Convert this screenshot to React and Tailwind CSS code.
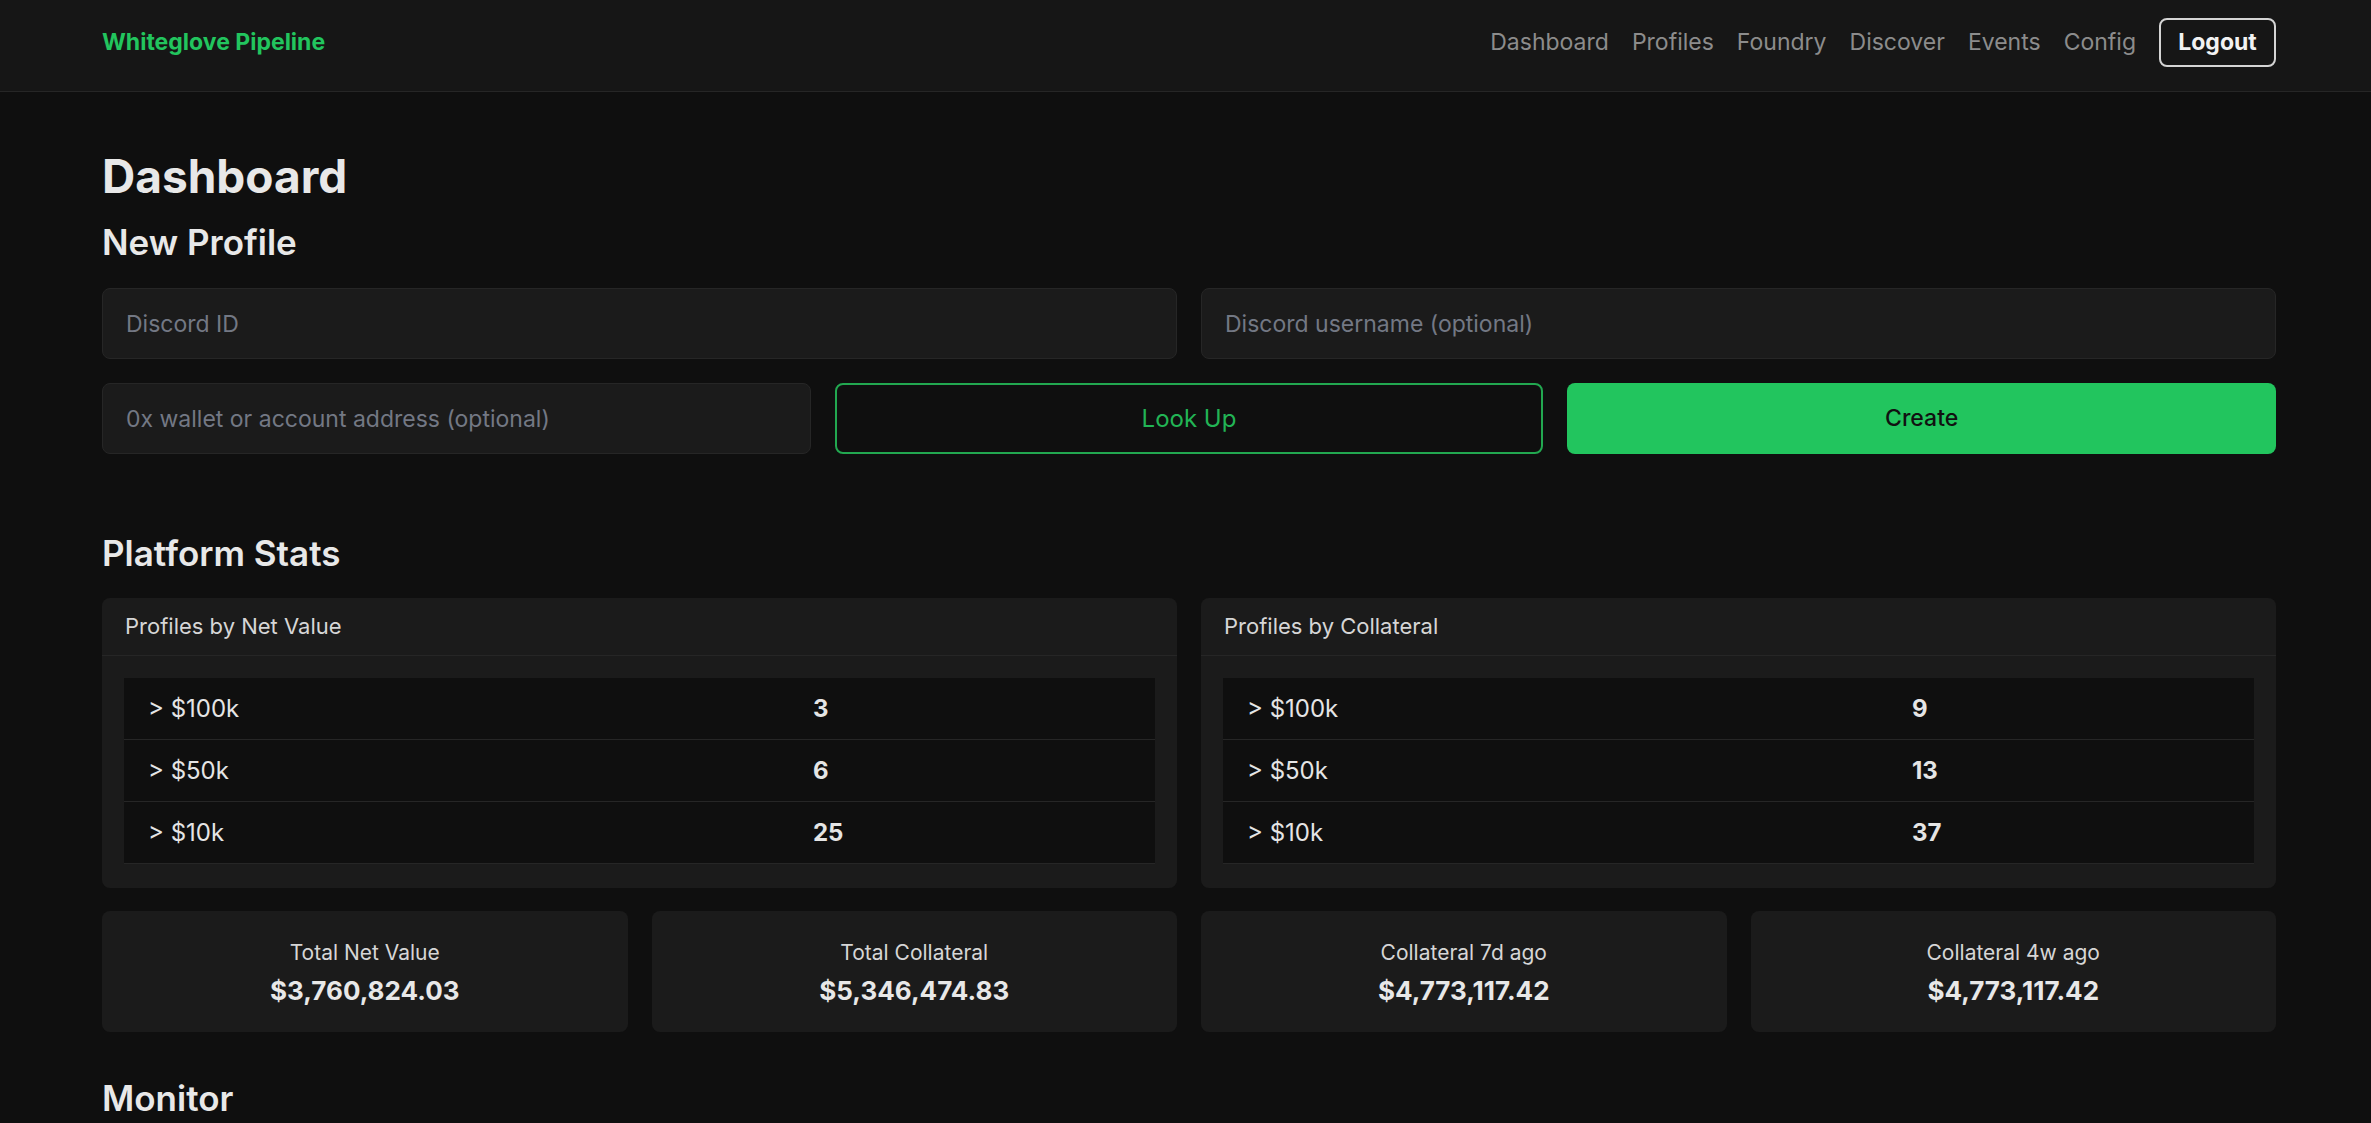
const NAV = ['Dashboard', 'Profiles', 'Foundry', 'Discover', 'Events', 'Config']

const NET_VALUE = [
  { label: '> $100k', count: 3 },
  { label: '> $50k', count: 6 },
  { label: '> $10k', count: 25 },
]

const COLLATERAL = [
  { label: '> $100k', count: 9 },
  { label: '> $50k', count: 13 },
  { label: '> $10k', count: 37 },
]

const TOTALS = [
  { label: 'Total Net Value', value: '$3,760,824.03' },
  { label: 'Total Collateral', value: '$5,346,474.83' },
  { label: 'Collateral 7d ago', value: '$4,773,117.42' },
  { label: 'Collateral 4w ago', value: '$4,773,117.42' },
]

const Field = ({ placeholder }) => (
  <input
    placeholder={placeholder}
    className="h-[71px] w-full rounded-[8px] border-[1.5px] border-[#262626] bg-[#1b1b1b] px-[23px] text-[23px] text-[#e5e5e5] placeholder:text-[#737884] outline-none"
  />
)

const BucketCard = ({ title, rows }) => (
  <div className="rounded-[8px] bg-[#1b1b1b]">
    <div className="flex h-[58px] items-center border-b-[1.5px] border-[#262626] px-[23px] text-[22px] text-[#d6d6d6]">
      {title}
    </div>
    <div className="px-[22px] pb-[24px] pt-[22px]">
      {rows.map(row => (
        <div
          key={row.label}
          className="flex h-[62px] items-center border-b-[1.5px] border-[#262626] bg-[#0f0f0f] text-[24px] text-[#e5e5e5]"
        >
          <span className="w-[689px] pl-[24px]">{row.label}</span>
          <span className="font-bold">{row.count}</span>
        </div>
      ))}
    </div>
  </div>
)

export default function App() {
  return (
    <div className="min-h-screen bg-[#0f0f0f] font-['Inter',sans-serif] text-[#e5e5e5]">
      <header className="border-b-[1.5px] border-[#262626] bg-[#161616] pl-[102px] pr-[95px]">
        <div className="flex h-[91px] items-center justify-between pb-[6px]">
          <span className="text-[23px] font-bold text-[#22c55e]">Whiteglove Pipeline</span>
          <nav className="flex items-center gap-[23px] text-[23px]">
            {NAV.map(item => (
              <a key={item} className="text-[#8c8c8c]">{item}</a>
            ))}
            <button className="h-[49px] w-[117px] rounded-[8px] border-2 border-[#d4d4d4] text-[23px] font-bold text-[#f2f2f2]">
              Logout
            </button>
          </nav>
        </div>
      </header>

      <main className="pl-[102px] pr-[95px] pt-[57px]">
        <h1 className="text-[46px] font-bold leading-[54px] text-[#e8e8e8]">Dashboard</h1>

        <h2 className="mt-[15px] text-[35px] font-semibold leading-[48px] text-[#e8e8e8]">New Profile</h2>
        <div className="mt-[22px] grid grid-cols-2 gap-[24px]">
          <Field placeholder="Discord ID" />
          <Field placeholder="Discord username (optional)" />
        </div>
        <div className="mt-[24px] grid grid-cols-3 gap-[24px]">
          <Field placeholder="0x wallet or account address (optional)" />
          <button className="h-[71px] rounded-[8px] border-2 border-[#22a850] text-[24px] text-[#22b455]">
            Look Up
          </button>
          <button className="h-[71px] rounded-[8px] bg-[#22c55e] text-[23px] font-medium text-[#111111]">
            Create
          </button>
        </div>

        <h2 className="mt-[75px] text-[35px] font-semibold leading-[48px] text-[#e8e8e8]">Platform Stats</h2>
        <div className="mt-[21px] grid grid-cols-2 gap-[24px]">
          <BucketCard title="Profiles by Net Value" rows={NET_VALUE} />
          <BucketCard title="Profiles by Collateral" rows={COLLATERAL} />
        </div>

        <div className="mt-[23px] grid grid-cols-4 gap-[24px]">
          {TOTALS.map(t => (
            <div
              key={t.label}
              className="flex h-[121px] flex-col items-center justify-center gap-[2px] rounded-[8px] bg-[#1b1b1b] pt-[4px]"
            >
              <span className="text-[21px] text-[#d6d6d6]">{t.label}</span>
              <span className="text-[26px] font-bold text-[#e8e8e8]">{t.value}</span>
            </div>
          ))}
        </div>

        <h2 className="mt-[42px] text-[35px] font-semibold leading-[48px] text-[#e8e8e8]">Monitor</h2>
      </main>
    </div>
  )
}
